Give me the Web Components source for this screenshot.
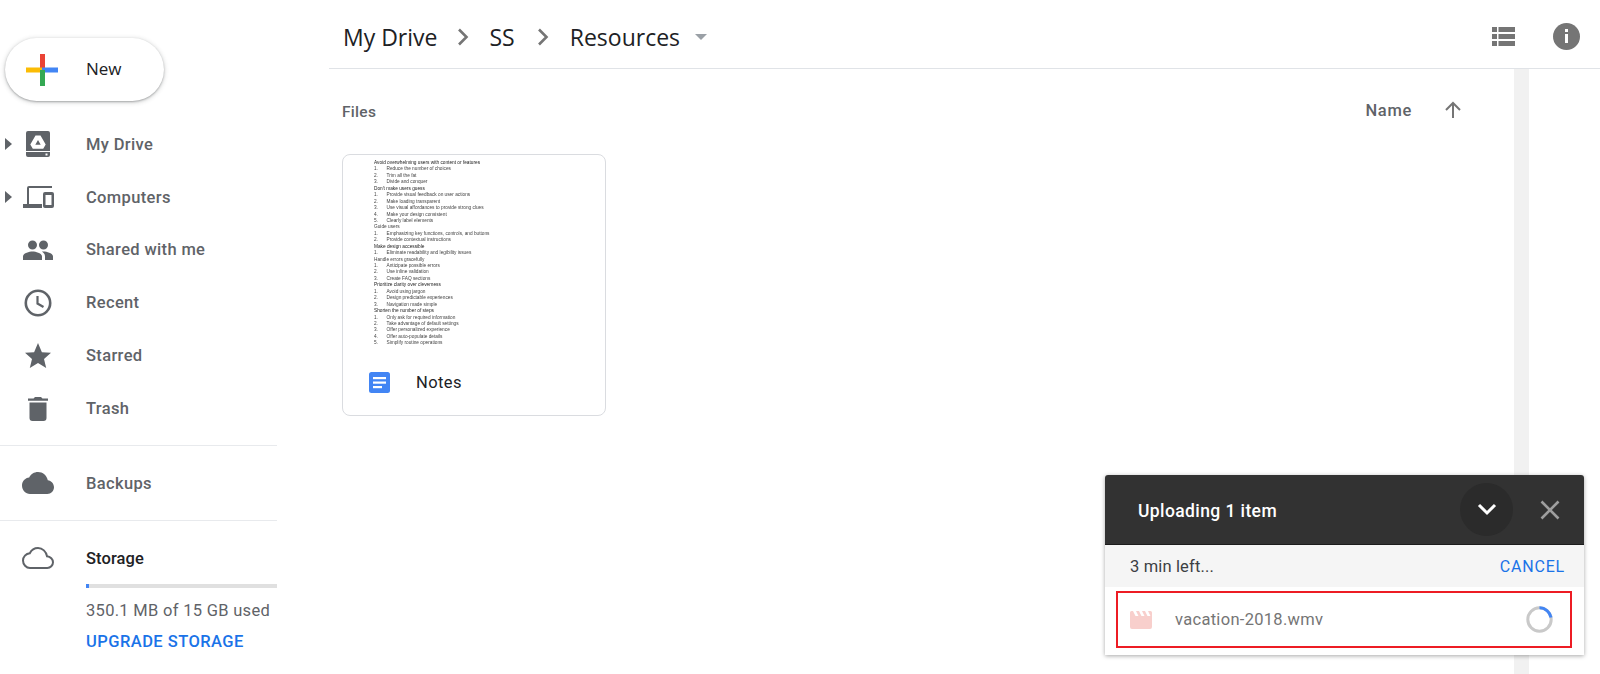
<!DOCTYPE html>
<html>
<head>
<meta charset="utf-8">
<title>My Drive</title>
<style>
  html, body { margin: 0; height: 100%; background: #fff; overflow: hidden; }
  body { font-family: Roboto, "Liberation Sans", sans-serif; }
</style>
</head>
<body>
<drive-app>
  <drive-sidebar slot="side"></drive-sidebar>
  <drive-header slot="head"></drive-header>
  <drive-files slot="body"></drive-files>
  <upload-panel slot="over"></upload-panel>
</drive-app>

<script>
class DriveApp extends HTMLElement {
  constructor() {
    super();
    this.attachShadow({ mode: 'open' });
    this.shadowRoot.innerHTML = `
      <style>
        :host { display: grid; grid-template-columns: 329px 1fr; grid-template-rows: 69px 1fr; width: 1600px; height: 674px; position: relative; overflow: hidden; }
        .side { grid-row: 1 / 3; }
        .scroll { display: flex; min-height: 0; }
      </style>
      <div class="side"><slot name="side"></slot></div>
      <div><slot name="head"></slot></div>
      <div class="scroll"><slot name="body"></slot></div>
      <slot name="over"></slot>
    `;
  }
}

class NavItem extends HTMLElement {
  constructor() {
    super();
    this.attachShadow({ mode: 'open' });
  }

  connectedCallback() {
    const arrow = this.hasAttribute('arrow');
    this.shadowRoot.innerHTML = `
      <style>
        :host { display: flex; align-items: center; height: 52.8px; position: relative; color: #5f6368; font-size: 16.5px; font-weight: 500; letter-spacing: .35px; }
        .arrow { width: 0; height: 0; border-left: 7px solid #5f6368; border-top: 6.5px solid transparent; border-bottom: 6.5px solid transparent; position: absolute; left: 5px; top: 20px; }
        .icon { width: 32px; height: 32px; margin-left: 22px; margin-right: 32px; display: flex; align-items: center; justify-content: center; }
        ::slotted(svg) { display: block; }
      </style>
      ${arrow ? '<span class="arrow"></span>' : ''}
      <span class="icon"><slot name="icon"></slot></span>
      <span><slot></slot></span>
    `;
  }
}

class DriveSidebar extends HTMLElement {
  constructor() {
    super();
    this.attachShadow({ mode: 'open' });
    this.shadowRoot.innerHTML = `
      <style>
        :host { display: block; height: 674px; }
        .new { box-sizing: border-box; width: 159px; height: 63px; margin: 38px 0 0 5px; border-radius: 32px; background: #fff; box-shadow: 0 1px 2px rgba(60,64,67,.35), 0 1px 4px 1px rgba(60,64,67,.18); display: flex; align-items: center; font: 500 17px "Open Sans", Roboto, sans-serif; color: #202124; }
        .new span { position: relative; top: -1px; }
        .new svg { margin-left: 21px; margin-right: 28px; display: block; }
        nav { margin-top: 17px; width: 277px; }
        hr { border: 0; border-top: 1px solid #e8eaed; margin: 10.5px 0 0; width: 277px; }
        .backups { margin-top: 10.4px; }
        .storage { position: relative; width: 277px; padding: 27px 0 0 86px; box-sizing: border-box; height: 140px; }
        .storage svg { position: absolute; left: 22px; top: 26px; }
        .title { color: #202124; font-size: 16.5px; font-weight: 500; line-height: 22px; letter-spacing: .1px; }
        .bar { height: 4px; background: #e0e0e0; margin-top: 14px; }
        .bar i { display: block; width: 3px; height: 4px; background: #4285f4; }
        .used { color: #5f6368; font-size: 16.5px; line-height: 20px; margin-top: 13px; letter-spacing: .3px; white-space: nowrap; }
        a { display: block; color: #1a73e8; font-size: 16.5px; font-weight: 500; line-height: 20px; margin-top: 10.7px; letter-spacing: .45px; white-space: nowrap; }
      </style>
      <div class="new">
        <svg width="32" height="32" viewBox="0 0 32 32">
          <rect x="14" y="0" width="5" height="16" fill="#ea4335"/>
          <rect x="0" y="13.5" width="16" height="5" fill="#fbbc04"/>
          <rect x="16" y="13.5" width="16" height="5" fill="#4285f4"/>
          <rect x="14" y="16" width="5" height="16" fill="#34a853"/>
        </svg>
        <span>New</span>
      </div>
      <nav>
        <nav-item arrow>
          <svg slot="icon" width="24" height="26" viewBox="0 0 24 26">
            <path fill="#5f6368" fill-rule="evenodd" d="M2 0h20a2 2 0 0 1 2 2v18H0V2a2 2 0 0 1 2-2zM0 21h24v3a2 2 0 0 1-2 2H2a2 2 0 0 1-2-2zm19.500 1.500v2h2v-2z"/>
            <path fill="#fff" fill-rule="evenodd" d="M9.500 4.500h5l5.200 9-2.500 4.300H6.800L4.300 13.500zM12 9l-2.700 4.700h5.400z"/>
          </svg>
          My Drive
        </nav-item>
        <nav-item arrow>
          <svg slot="icon" width="31" height="22" viewBox="0 0 31 22"><path fill="#5f6368" fill-rule="evenodd" d="M4 2a2 2 0 0 1 2-2h23v2H6v16h13v4H0v-4h4zM22 6h7a2 2 0 0 1 2 2v12a2 2 0 0 1-2 2h-7a2 2 0 0 1-2-2V8a2 2 0 0 1 2-2zm.500 3v10h6V9z"/></svg>
          Computers
        </nav-item>
        <nav-item>
          <svg slot="icon" width="30" height="20" viewBox="0 0 30 20"><path fill="#5f6368" d="M9.500 9.500a4.500 4.500 0 1 0 0-9 4.500 4.500 0 0 0 0 9zm11 0a4.500 4.500 0 1 0 0-9 4.500 4.500 0 0 0 0 9zM9.500 11.500C6 11.500 0 13.300 0 16.500V20h19v-3.500c0-3.200-6-5-9.500-5zm11 0c-.5 0-1 0-1.600.1 1.900 1.200 3.100 2.800 3.100 4.900V20h8v-3.500c0-3.200-6-5-9.500-5z"/></svg>
          Shared with me
        </nav-item>
        <nav-item>
          <svg slot="icon" width="28" height="28" viewBox="0 0 28 28"><circle cx="14" cy="14" r="12.200" fill="none" stroke="#5f6368" stroke-width="2.600"/><path fill="none" stroke="#5f6368" stroke-width="2.200" d="M13.500 7v7.500l6 3.500"/></svg>
          Recent
        </nav-item>
        <nav-item>
          <svg slot="icon" width="26" height="25" viewBox="0 0 26 25"><path fill="#5f6368" d="M13 0l3.900 9.200 9.100.6-7 6.100 2.200 9.100-8.200-4.900-8.200 4.900L7 15.900 0 9.800l9.100-.6z"/></svg>
          Starred
        </nav-item>
        <nav-item>
          <svg slot="icon" width="20" height="25" viewBox="0 0 20 25"><path fill="#5f6368" d="M1.500 6.500h17V22a3 3 0 0 1-3 3h-11a3 3 0 0 1-3-3zM0 2.500h5.500L7 1h6l1.500 1.500H20v2.200H0z"/></svg>
          Trash
        </nav-item>
      </nav>
      <hr>
      <nav-item class="backups">
        <svg slot="icon" width="32" height="22" viewBox="0 0 32 22"><path fill="#5f6368" d="M25.800 8.300C24.900 3.500 20.800 0 16 0c-3.900 0-7.200 2.200-8.800 5.400C3.100 5.800 0 9.300 0 13.500 0 18 3.600 22 8 22h17.300c3.700 0 6.700-3 6.700-6.700 0-3.500-2.800-6.800-6.200-7z"/></svg>
        Backups
      </nav-item>
      <hr>
      <div class="storage">
        <svg width="32" height="22" viewBox="0 0 32 22"><path fill="none" stroke="#5f6368" stroke-width="2" d="M25 9.200C24.200 4.600 20.500 1 16 1c-3.500 0-6.600 2-8.200 5.200C3.900 6.600 1 9.700 1 13.500 1 17.600 4.200 21 8 21h17.300c3.100 0 5.700-2.600 5.700-5.700 0-3-2.600-5.900-6-6.100z"/></svg>
        <div class="title">Storage</div>
        <div class="bar"><i></i></div>
        <div class="used">350.1 MB of 15 GB used</div>
        <a>UPGRADE STORAGE</a>
      </div>
    `;
  }
}

class DriveHeader extends HTMLElement {
  constructor() {
    super();
    this.attachShadow({ mode: 'open' });
    this.shadowRoot.innerHTML = `
      <style>
        :host { display: flex; align-items: center; box-sizing: border-box; height: 69px; border-bottom: 1px solid #e0e3e7; padding: 6px 0 0 14px; font: 400 23px "Open Sans", Roboto, sans-serif; color: #202124; }
        .sep { display: block; margin: 0 20px 0 20px; }
        .sep.two { margin: 0 21px 0 22px; }
        .drop { width: 0; height: 0; border-left: 6px solid transparent; border-right: 6px solid transparent; border-top: 6px solid #9aa0a6; margin-left: 15px; }
        .right { margin: -2px 0 0 auto; display: flex; align-items: center; }
        .list { margin-right: 38px; display: block; }
        .info { margin-right: 20px; display: block; }
      </style>
      <span>My Drive</span>
      <svg class="sep" width="12" height="18" viewBox="0 0 12 18"><path fill="none" stroke="#757575" stroke-width="2.600" d="M2 1.500 9.500 9 2 16.500"/></svg>
      <span>SS</span>
      <svg class="sep two" width="12" height="18" viewBox="0 0 12 18"><path fill="none" stroke="#757575" stroke-width="2.600" d="M2 1.500 9.500 9 2 16.500"/></svg>
      <span>Resources</span>
      <span class="drop"></span>
      <div class="right">
        <svg class="list" width="23" height="19" viewBox="0 0 23 19"><path fill="#757575" d="M0 0h5v5H0zM6.500 0H23v5H6.500zM0 7h5v5H0zM6.500 7H23v5H6.500zM0 14h5v5H0zM6.500 14H23v5H6.500z"/></svg>
        <svg class="info" width="27" height="27" viewBox="0 0 27 27"><circle cx="13.500" cy="13.500" r="13.500" fill="#757575"/><rect x="12" y="6" width="3" height="3" fill="#fff"/><rect x="12" y="11" width="3" height="9" fill="#fff"/></svg>
      </div>
    `;
  }
}

class FileCard extends HTMLElement {
  constructor() {
    super();
    this.attachShadow({ mode: 'open' });
    this.shadowRoot.innerHTML = `
      <style>
        :host { display: block; box-sizing: border-box; width: 264px; height: 262px; border: 1px solid #dadce0; border-radius: 8px; overflow: hidden; }
        .doc { box-sizing: border-box; height: 205px; padding: 5px 0 0 31px; font: 4.750px/6.430px "Liberation Sans", sans-serif; color: #444; filter: blur(.6px); white-space: pre; }
        .foot { display: flex; align-items: center; height: 44px; padding-left: 26px; font: 400 16.5px Roboto, sans-serif; letter-spacing: .4px; color: #202124; }
        .foot svg { margin-right: 26px; display: block; }
      </style>
      <div class="doc"><slot></slot></div>
      <div class="foot">
        <svg width="21" height="21" viewBox="0 0 21 21"><rect width="21" height="21" rx="2.500" fill="#4285f4"/><rect x="4" y="5" width="13" height="2.200" fill="#fff"/><rect x="4" y="9.500" width="13" height="2.200" fill="#fff"/><rect x="4" y="14" width="9" height="2.200" fill="#fff"/></svg>
        <slot name="name"></slot>
      </div>
    `;
  }
}

class DriveFiles extends HTMLElement {
  constructor() {
    super();
    this.attachShadow({ mode: 'open' });
    const notes = [
      ['h', 'Avoid overwhelming users with content or features'],
      ['1.', 'Reduce the number of choices'], ['2.', 'Trim all the fat'], ['3.', 'Divide and conquer'],
      ['h', "Don't make users guess"],
      ['1.', 'Provide visual feedback on user actions'], ['2.', 'Make loading transparent'], ['3.', 'Use visual affordances to provide strong clues'], ['4.', 'Make your design consistent'], ['5.', 'Clearly label elements'],
      ['t', 'Guide users'],
      ['1.', 'Emphasizing key functions, controls, and buttons'], ['2.', 'Provide contextual instructions'],
      ['h', 'Make design accessible'],
      ['1.', 'Eliminate readability and legibility issues'],
      ['t', 'Handle errors gracefully'],
      ['1.', 'Anticipate possible errors'], ['2.', 'Use inline validation'], ['3.', 'Create FAQ sections'],
      ['h', 'Prioritize clarity over cleverness'],
      ['1.', 'Avoid using jargon'], ['2.', 'Design predictable experiences'], ['3.', 'Navigation made simple'],
      ['h', 'Shorten the number of steps'],
      ['1.', 'Only ask for required information'], ['2.', 'Take advantage of default settings'], ['3.', 'Offer personalized experience'], ['4.', 'Offer auto-populate details'], ['5.', 'Simplify routine operations']
    ];
    const rows = notes.map(([k, t]) => {
      if (k === 'h') return `<div style="color:#222">${t}</div>`;
      if (k === 't') return `<div>${t}</div>`;
      return `<div style="display:flex"><span style="width:12.5px">${k}</span>${t}</div>`;
    }).join('');
    this.shadowRoot.innerHTML = `
      <style>
        :host { display: flex; flex: 1; min-width: 0; }
        .main { width: 1185px; padding: 30px 0 0 13px; box-sizing: border-box; }
        .top { display: flex; align-items: center; height: 22px; color: #5f6368; font-size: 15.5px; font-weight: 500; letter-spacing: .3px; padding-right: 52px; }
        .files { margin-top: 4px; }
        .name { margin-left: auto; font-size: 16.5px; letter-spacing: .7px; }
        .up { margin-left: 32px; display: block; }
        file-card { margin-top: 33px; }
        .track { width: 15px; background: #f1f1f1; }
      </style>
      <div class="main">
        <div class="top">
          <span class="files">Files</span>
          <span class="name">Name</span>
          <svg class="up" width="18" height="18" viewBox="0 0 18 18"><path fill="none" stroke="#757575" stroke-width="2" d="M9 17V2M2 9l7-7 7 7"/></svg>
        </div>
        <file-card>${rows}<span slot="name">Notes</span></file-card>
      </div>
      <div class="track"></div>
    `;
  }
}

class UploadPanel extends HTMLElement {
  constructor() {
    super();
    this.attachShadow({ mode: 'open' });
    this.shadowRoot.innerHTML = `
      <style>
        :host { position: absolute; left: 1105px; top: 475px; width: 479px; height: 180px; background: #fff; border-radius: 3px 3px 0 0; box-shadow: 0 1px 4px rgba(0,0,0,.35); font-family: Roboto, sans-serif; }
        .head { box-sizing: border-box; height: 70px; background: #323232; border-radius: 3px 3px 0 0; color: #fff; display: flex; align-items: center; padding-left: 33px; font-size: 17.5px; font-weight: 500; letter-spacing: .4px; border-bottom: 1px solid #1c1c1c; }
        .head > span:first-child { position: relative; top: 1px; }
        .chev { margin-left: auto; width: 53px; height: 53px; border-radius: 50%; background: #2b2b2b; display: flex; align-items: center; justify-content: center; }
        .close { margin: 0 24px 0 27px; display: block; }
        .sub { display: flex; align-items: center; height: 42px; background: #f5f5f5; padding: 0 19px 0 25px; font-size: 16.5px; color: #3c4043; letter-spacing: .15px; }
        .sub a { margin-left: auto; color: #1a73e8; letter-spacing: .8px; font-size: 16px; }
        .row { position: relative; box-sizing: border-box; display: flex; align-items: center; margin: 4px 12px 0 11px; height: 57px; border: 2px solid #ed1c24; padding: 0 17px 0 12px; color: #757575; font-size: 16.5px; letter-spacing: .3px; }
        .row .clip { margin-right: 23px; display: block; }
        .row .spin { margin-left: auto; display: block; }
      </style>
      <div class="head">
        <span>Uploading 1 item</span>
        <span class="chev"><svg width="20" height="13" viewBox="0 0 20 13"><path fill="none" stroke="#fff" stroke-width="3" d="M2 2l8 8 8-8"/></svg></span>
        <svg class="close" width="20" height="20" viewBox="0 0 20 20"><path fill="none" stroke="#9e9e9e" stroke-width="2.600" d="M1.500 1.500l17 17M18.500 1.500l-17 17"/></svg>
      </div>
      <div class="sub"><span>3 min left...</span><a>CANCEL</a></div>
      <div class="row">
        <svg class="clip" width="22" height="18" viewBox="0 0 22 18"><path fill="#f8cfcc" d="M0 1.500A1.500 1.500 0 0 1 1.500 0H3l2.500 5h3L6 0h3l2.500 5h3L12 0h3l2.500 5h3L18 0h2.500A1.500 1.500 0 0 1 22 1.500V16a2 2 0 0 1-2 2H2a2 2 0 0 1-2-2z"/></svg>
        <span>vacation-2018.wmv</span>
        <svg class="spin" width="27" height="27" viewBox="0 0 27 27"><circle cx="13.500" cy="13.500" r="11.700" fill="none" stroke="#c9c9c9" stroke-width="3"/><path fill="none" stroke="#4285f4" stroke-width="3" d="M13.500 1.800A11.700 11.700 0 0 1 25 11.500"/></svg>
      </div>
    `;
  }
}

customElements.define('nav-item', NavItem);
customElements.define('drive-sidebar', DriveSidebar);
customElements.define('drive-header', DriveHeader);
customElements.define('file-card', FileCard);
customElements.define('drive-files', DriveFiles);
customElements.define('upload-panel', UploadPanel);
customElements.define('drive-app', DriveApp);
</script>
</body>
</html>
